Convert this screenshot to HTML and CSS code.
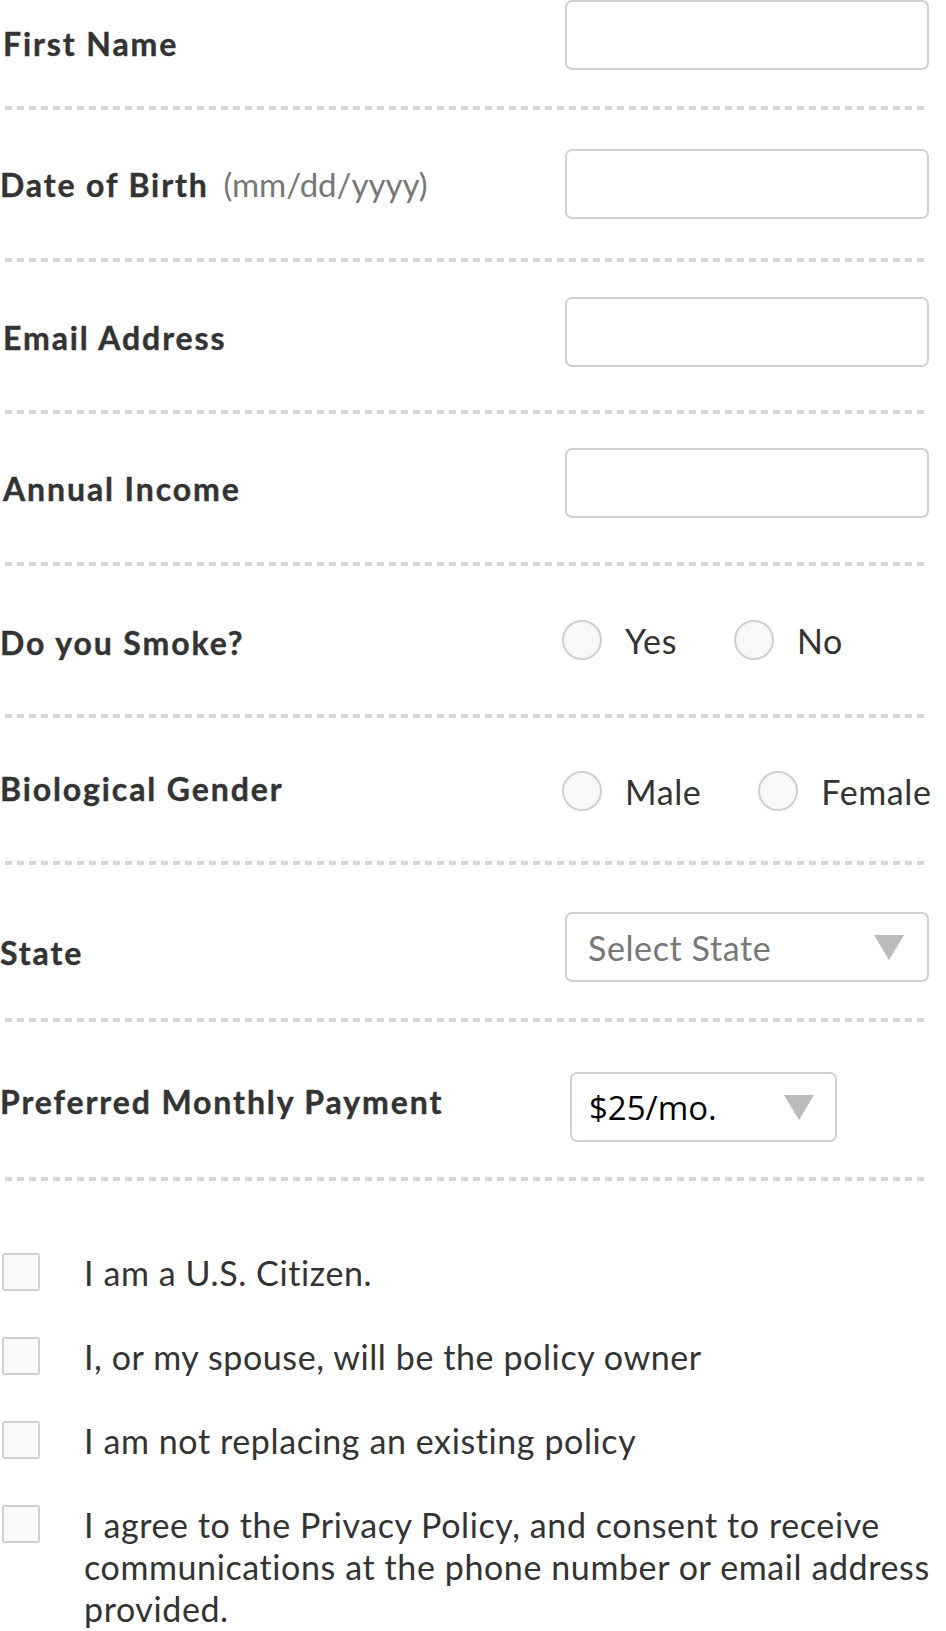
FILE: index.html
```html
<!DOCTYPE html>
<html lang="en">
<head>
<meta charset="utf-8">
<title>Quote Form</title>
<link rel="stylesheet" href="styles.css">
</head>
<body>
<form class="form">
  <div class="row row--first">
    <label class="label label--first">First Name</label>
    <input class="text-input" type="text">
  </div>
  <div class="divider"></div>

  <div class="row">
    <label class="label">Date of Birth <span class="hint">(mm/dd/yyyy)</span></label>
    <input class="text-input" type="text">
  </div>
  <div class="divider"></div>

  <div class="row row--raised">
    <label class="label label--down label--inset">Email Address</label>
    <input class="text-input" type="text">
  </div>
  <div class="divider"></div>

  <div class="row row--raised-more">
    <label class="label label--down label--inset">Annual Income</label>
    <input class="text-input" type="text">
  </div>
  <div class="divider"></div>

  <div class="row">
    <span class="label label--smoke">Do you Smoke?</span>
    <div class="radio-group">
      <label class="option"><input class="radio" type="radio" name="smoke"><span>Yes</span></label>
      <label class="option"><input class="radio" type="radio" name="smoke"><span>No</span></label>
    </div>
  </div>
  <div class="divider"></div>

  <div class="row row--gender">
    <span class="label label--gender">Biological Gender</span>
    <div class="radio-group">
      <label class="option"><input class="radio" type="radio" name="gender"><span>Male</span></label>
      <label class="option"><input class="radio" type="radio" name="gender"><span>Female</span></label>
    </div>
  </div>
  <div class="divider"></div>

  <div class="row row--state">
    <span class="label label--down">State</span>
    <div class="select">
      <span class="select-value select-value--placeholder">Select State</span>
      <span class="select-arrow"></span>
    </div>
  </div>
  <div class="divider"></div>

  <div class="row row--payment">
    <span class="label label--up">Preferred Monthly Payment</span>
    <div class="select select--payment">
      <span class="select-value select-value--native">$25/mo.</span>
      <span class="select-arrow"></span>
    </div>
  </div>
  <div class="divider"></div>

  <div class="checks">
    <label class="check"><input class="checkbox" type="checkbox"><span class="check-text">I am a U.S. Citizen.</span></label>
    <label class="check"><input class="checkbox" type="checkbox"><span class="check-text">I, or my spouse, will be the policy owner</span></label>
    <label class="check"><input class="checkbox" type="checkbox"><span class="check-text">I am not replacing an existing policy</span></label>
    <label class="check"><input class="checkbox" type="checkbox"><span class="check-text">I agree to the Privacy Policy, and consent to receive communications at the phone number or email address provided.</span></label>
  </div>
</form>
</body>
</html>
```

FILE: styles.css
```css
* {
  box-sizing: border-box;
}

html, body {
  margin: 0;
  padding: 0;
  background: #ffffff;
}

body {
  font-family: "Lato", "Liberation Sans", sans-serif;
  color: #333333;
  width: 946px;
  overflow: hidden;
}

.form {
  width: 930px;
  margin: 0;
}

/* ---------- rows ---------- */

.row {
  display: flex;
  align-items: center;
  padding: 39px 0;
}

.row--first {
  padding: 0 0 36px;
}

.row--raised {
  padding: 35px 0 43px;
}

.row--raised-more {
  padding: 34px 0 44px;
}

.row--gender {
  padding: 38px 0 35px;
}

.row--state {
  padding: 47px 0 36px;
}

.row--payment {
  padding: 50px 0 35px;
}

.label {
  flex: 0 0 565px;
  font-size: 32px;
  font-weight: 700;
  letter-spacing: 1.9px;
  -webkit-text-stroke: 0.4px #333333;
  color: #333333;
  white-space: nowrap;
}

.label--first {
  padding: 16px 0 0 3px;
}

.label--inset {
  padding-left: 3px;
}

.label--down {
  padding-top: 11px;
}

.label--smoke {
  padding-top: 4px;
}

.label--gender {
  padding-bottom: 6px;
}

.label--up {
  padding-bottom: 12px;
}

.hint {
  font-size: 33px;
  font-weight: 400;
  letter-spacing: 0;
  -webkit-text-stroke: 0;
  color: #777777;
  margin-left: 5px;
}

.divider {
  height: 4px;
  margin: 0 2px 0 5px;
  background-image: repeating-linear-gradient(to right, #d6d6d6 0 7px, transparent 7px 12px);
}

/* ---------- controls ---------- */

.text-input {
  width: 364px;
  height: 70px;
  border: 2px solid #d0d0d0;
  border-radius: 7px;
  background: #ffffff;
  margin: 0;
  padding: 0 16px;
  font: inherit;
  outline: none;
}

.radio-group {
  display: flex;
  align-items: center;
  height: 70px;
  margin-left: -3px;
}

.option {
  display: flex;
  align-items: center;
  gap: 23px;
  margin-right: 57px;
  font-size: 34px;
  letter-spacing: 0.6px;
  color: #333333;
}

.option:last-child {
  margin-right: 0;
}

.radio {
  appearance: none;
  -webkit-appearance: none;
  width: 40px;
  height: 40px;
  margin: 0;
  border: 2px solid #cfcfcf;
  border-radius: 50%;
  background: #f8f8f8;
}

.select {
  display: flex;
  align-items: center;
  justify-content: space-between;
  width: 364px;
  height: 70px;
  padding: 0 23px 0 21px;
  border: 2px solid #d0d0d0;
  border-radius: 7px;
  background: #ffffff;
}

.select--payment {
  width: 267px;
  margin-left: 5px;
  padding: 0 21px 0 17px;
}

.select-value {
  font-size: 34px;
  letter-spacing: 0.6px;
}

.select-value--placeholder {
  color: #777777;
}

.select-value--native {
  font-family: "Open Sans", "Liberation Sans", sans-serif;
  font-size: 33px;
  letter-spacing: 0;
  color: #000000;
}

.select-arrow {
  width: 0;
  height: 0;
  border-left: 15px solid transparent;
  border-right: 15px solid transparent;
  border-top: 25px solid #bbbbbb;
}

/* ---------- checkboxes ---------- */

.checks {
  display: flex;
  flex-direction: column;
  gap: 42px;
  padding-top: 71px;
  margin-right: -16px;
}

.check {
  display: flex;
  align-items: flex-start;
  font-size: 34px;
  letter-spacing: 0.6px;
  line-height: 42px;
  color: #333333;
}

.checkbox {
  appearance: none;
  -webkit-appearance: none;
  flex: 0 0 38px;
  width: 38px;
  height: 38px;
  margin: 1px 44px 0 2px;
  border: 2px solid #d0d0d0;
  border-radius: 3px;
  background: #f8f8f8;
}

.check-text {
  flex: 1;
}
```
